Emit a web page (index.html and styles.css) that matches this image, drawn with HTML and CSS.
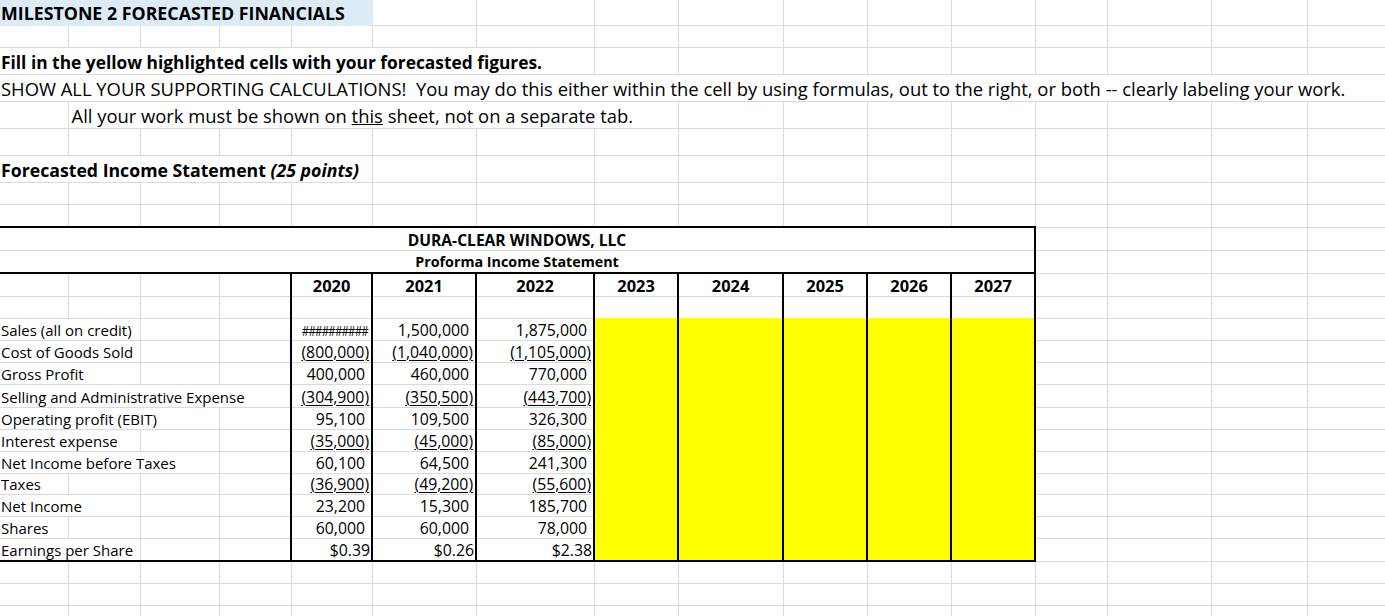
FILE: index.html
```html
<!DOCTYPE html>
<html lang="en">
<head>
<meta charset="utf-8">
<title>Milestone 2 Forecasted Financials</title>
<link rel="stylesheet" href="styles.css">
</head>
<body>
<table class="sheet">
  <colgroup>
    <col class="ca"><col class="cb"><col class="cc"><col class="cd"><col class="ce"><col class="cf"><col class="cg"><col class="ch">
    <col class="ci"><col class="cj"><col class="ck"><col class="cl"><col class="cm"><col class="cn"><col class="co"><col class="cp">
  </colgroup>
  <tbody>
    <tr class="h25">
      <td colspan="5" class="title">MILESTONE 2 FORECASTED FINANCIALS</td>
      <td></td><td></td><td></td><td></td><td></td><td></td><td></td><td></td><td></td><td></td><td></td>
    </tr>
    <tr class="h22">
      <td></td><td></td><td></td><td></td><td></td><td></td><td></td><td></td><td></td><td></td><td></td><td></td><td></td><td></td><td></td><td></td>
    </tr>
    <tr class="h27">
      <td colspan="7" class="big bold">Fill in the yellow highlighted cells with your forecasted figures.</td>
      <td></td><td></td><td></td><td></td><td></td><td></td><td></td><td></td><td></td>
    </tr>
    <tr class="h27">
      <td colspan="16" class="big">SHOW ALL YOUR SUPPORTING CALCULATIONS!&nbsp; You may do this either within the cell by using formulas, out to the right, or both -- clearly labeling your work.</td>
    </tr>
    <tr class="h27">
      <td></td>
      <td colspan="7" class="big indent">All your work must be shown on <u>this</u> sheet, not on a separate tab.</td>
      <td></td><td></td><td></td><td></td><td></td><td></td><td></td><td></td>
    </tr>
    <tr class="h27">
      <td></td><td></td><td></td><td></td><td></td><td></td><td></td><td></td><td></td><td></td><td></td><td></td><td></td><td></td><td></td><td></td>
    </tr>
    <tr class="h27">
      <td colspan="5" class="big bold sect">Forecasted Income Statement <i>(25 points)</i></td>
      <td></td><td></td><td></td><td></td><td></td><td></td><td></td><td></td><td></td><td></td><td></td>
    </tr>
    <tr class="h22">
      <td></td><td></td><td></td><td></td><td></td><td></td><td></td><td></td><td></td><td></td><td></td><td></td><td></td><td></td><td></td><td></td>
    </tr>
    <tr class="h23">
      <td></td><td></td><td></td><td></td><td></td><td></td><td></td><td></td><td></td><td></td><td></td><td></td><td></td><td></td><td></td><td></td>
    </tr>
    <tr class="h23">
      <td colspan="12" class="head top">DURA-CLEAR WINDOWS, LLC</td>
      <td></td><td></td><td></td><td></td>
    </tr>
    <tr class="h23">
      <td colspan="12" class="head sub bottom">Proforma Income Statement</td>
      <td></td><td></td><td></td><td></td>
    </tr>
    <tr class="h23">
      <td></td><td></td><td></td><td></td>
      <td class="box year">2020</td><td class="box year">2021</td><td class="box year">2022</td>
      <td class="box year">2023</td><td class="box year">2024</td><td class="box year">2025</td><td class="box year">2026</td><td class="box year">2027</td>
      <td></td><td></td><td></td><td></td>
    </tr>
    <tr class="h22">
      <td></td><td></td><td></td><td></td>
      <td class="box"></td><td class="box"></td><td class="box"></td>
      <td class="box pre"></td><td class="box pre"></td><td class="box pre"></td><td class="box pre"></td><td class="box pre"></td>
      <td></td><td></td><td></td><td></td>
    </tr>
    <tr class="h22">
      <td colspan="2" class="label">Sales (all on credit)</td><td></td><td></td>
      <td class="box num hash"><span class="squeeze">##########</span></td><td class="box num pos">1,500,000</td><td class="box num pos">1,875,000</td>
      <td class="box fill"></td><td class="box fill"></td><td class="box fill"></td><td class="box fill"></td><td class="box fill"></td>
      <td></td><td></td><td></td><td></td>
    </tr>
    <tr class="h22">
      <td colspan="2" class="label">Cost of Goods Sold</td><td></td><td></td>
      <td class="box num neg"><u>(800,000)</u></td><td class="box num neg"><u>(1,040,000)</u></td><td class="box num neg"><u>(1,105,000)</u></td>
      <td class="box fill"></td><td class="box fill"></td><td class="box fill"></td><td class="box fill"></td><td class="box fill"></td>
      <td></td><td></td><td></td><td></td>
    </tr>
    <tr class="h22">
      <td colspan="2" class="label">Gross Profit</td><td></td><td></td>
      <td class="box num pos">400,000</td><td class="box num pos">460,000</td><td class="box num pos">770,000</td>
      <td class="box fill"></td><td class="box fill"></td><td class="box fill"></td><td class="box fill"></td><td class="box fill"></td>
      <td></td><td></td><td></td><td></td>
    </tr>
    <tr class="h23">
      <td colspan="4" class="label">Selling and Administrative Expense</td>
      <td class="box num neg"><u>(304,900)</u></td><td class="box num neg"><u>(350,500)</u></td><td class="box num neg"><u>(443,700)</u></td>
      <td class="box fill"></td><td class="box fill"></td><td class="box fill"></td><td class="box fill"></td><td class="box fill"></td>
      <td></td><td></td><td></td><td></td>
    </tr>
    <tr class="h22">
      <td colspan="3" class="label">Operating profit (EBIT)</td><td></td>
      <td class="box num pos">95,100</td><td class="box num pos">109,500</td><td class="box num pos">326,300</td>
      <td class="box fill"></td><td class="box fill"></td><td class="box fill"></td><td class="box fill"></td><td class="box fill"></td>
      <td></td><td></td><td></td><td></td>
    </tr>
    <tr class="h22">
      <td colspan="2" class="label">Interest expense</td><td></td><td></td>
      <td class="box num neg"><u>(35,000)</u></td><td class="box num neg"><u>(45,000)</u></td><td class="box num neg"><u>(85,000)</u></td>
      <td class="box fill"></td><td class="box fill"></td><td class="box fill"></td><td class="box fill"></td><td class="box fill"></td>
      <td></td><td></td><td></td><td></td>
    </tr>
    <tr class="h22">
      <td colspan="3" class="label">Net Income before Taxes</td><td></td>
      <td class="box num pos">60,100</td><td class="box num pos">64,500</td><td class="box num pos">241,300</td>
      <td class="box fill"></td><td class="box fill"></td><td class="box fill"></td><td class="box fill"></td><td class="box fill"></td>
      <td></td><td></td><td></td><td></td>
    </tr>
    <tr class="h21">
      <td class="label">Taxes</td><td></td><td></td><td></td>
      <td class="box num neg"><u>(36,900)</u></td><td class="box num neg"><u>(49,200)</u></td><td class="box num neg"><u>(55,600)</u></td>
      <td class="box fill"></td><td class="box fill"></td><td class="box fill"></td><td class="box fill"></td><td class="box fill"></td>
      <td></td><td></td><td></td><td></td>
    </tr>
    <tr class="h22">
      <td colspan="2" class="label">Net Income</td><td></td><td></td>
      <td class="box num pos">23,200</td><td class="box num pos">15,300</td><td class="box num pos">185,700</td>
      <td class="box fill"></td><td class="box fill"></td><td class="box fill"></td><td class="box fill"></td><td class="box fill"></td>
      <td></td><td></td><td></td><td></td>
    </tr>
    <tr class="h22">
      <td class="label">Shares</td><td></td><td></td><td></td>
      <td class="box num pos">60,000</td><td class="box num pos">60,000</td><td class="box num pos">78,000</td>
      <td class="box fill"></td><td class="box fill"></td><td class="box fill"></td><td class="box fill"></td><td class="box fill"></td>
      <td></td><td></td><td></td><td></td>
    </tr>
    <tr class="h23 last">
      <td colspan="2" class="label end">Earnings per Share</td><td class="end"></td><td class="end"></td>
      <td class="box num eps end">$0.39</td><td class="box num eps end">$0.26</td><td class="box num eps end">$2.38</td>
      <td class="box fill end"></td><td class="box fill end"></td><td class="box fill end"></td><td class="box fill end"></td><td class="box fill end"></td>
      <td></td><td></td><td></td><td></td>
    </tr>
    <tr class="h22">
      <td></td><td></td><td></td><td></td><td></td><td></td><td></td><td></td><td></td><td></td><td></td><td></td><td></td><td></td><td></td><td></td>
    </tr>
    <tr class="h22">
      <td></td><td></td><td></td><td></td><td></td><td></td><td></td><td></td><td></td><td></td><td></td><td></td><td></td><td></td><td></td><td></td>
    </tr>
    <tr class="h22">
      <td></td><td></td><td></td><td></td><td></td><td></td><td></td><td></td><td></td><td></td><td></td><td></td><td></td><td></td><td></td><td></td>
    </tr>
  </tbody>
</table>
</body>
</html>
```

FILE: styles.css
```css
html, body {
  margin: 0;
  padding: 0;
  background: #ffffff;
  overflow: hidden;
}

body {
  font-family: "Open Sans", "Noto Sans", sans-serif;
  color: #000000;
}

.sheet {
  border-collapse: collapse;
  table-layout: fixed;
  width: 1397px;
}

.ca { width: 68px; }
.cb { width: 72px; }
.cc { width: 79px; }
.cd { width: 72px; }
.ce { width: 81px; }
.cf { width: 104px; }
.cg { width: 118px; }
.ch { width: 84px; }
.ci { width: 105px; }
.cj { width: 84px; }
.ck { width: 84px; }
.cl { width: 84px; }
.cm { width: 72px; }
.cn { width: 104px; }
.co { width: 96px; }
.cp { width: 90px; }

.h21 { height: 21px; }
.h22 { height: 22px; }
.h23 { height: 23px; }
.h25 { height: 25px; }
.h27 { height: 27px; }

.sheet td {
  border: 1px solid #dadada;
  padding: 0 3px 1px 3px;
  white-space: nowrap;
  overflow: visible;
  vertical-align: bottom;
  font-size: 15px;
  line-height: 18px;
}

.sheet tr > td:first-child {
  border-left: none;
}

.sheet tr:first-child > td {
  border-top: none;
}

.title {
  background: #ddebf7;
  border-bottom-color: #ddebf7 !important;
  border-right-color: #ddebf7 !important;
  font-size: 17.8px !important;
  font-weight: 700;
  line-height: 22px !important;
  padding-left: 1px !important;
  padding-bottom: 1px !important;
}

.big {
  font-size: 18.4px !important;
  line-height: 22px !important;
  padding-left: 1px !important;
  padding-bottom: 1px !important;
}

.big.bold {
  font-size: 17.35px !important;
}

.big.bold.sect {
  font-size: 17.7px !important;
}

.bold { font-weight: 700; }

.indent { padding-left: 3px !important; }

.head {
  text-align: center;
  font-weight: 700;
  font-size: 15.6px !important;
  border-right: 2px solid #000000 !important;
}

.head.top { border-top: 2px solid #000000 !important; }
.head.bottom { border-bottom: 2px solid #000000 !important; }
.head.sub { font-size: 14.3px !important; }

.box {
  border-left: 2px solid #000000 !important;
  border-right: 2px solid #000000 !important;
}

.year {
  text-align: center;
  font-weight: 700;
  font-size: 16.4px !important;
}

.pre { border-bottom-color: #ffff00 !important; }

.fill {
  background: #ffff00;
  border-top-color: #ffff00 !important;
  border-bottom-color: #ffff00 !important;
}

.label { padding-left: 1px !important; }

.num {
  text-align: right;
  font-size: 15.8px !important;
}
.pos { padding-right: 6px !important; }
.neg { padding-right: 2px !important; }
.eps { padding-right: 1px !important; }
.hash {
  padding-right: 3px !important;
  font-size: 15px !important;
}

.squeeze {
  display: inline-block;
  letter-spacing: -1px;
  transform: scaleX(0.76);
  transform-origin: right bottom;
  margin-left: -40px;
}

.num u {
  text-decoration-thickness: 1px;
  text-underline-offset: 2px;
}

.end { border-bottom: 2px solid #000000 !important; }
```
